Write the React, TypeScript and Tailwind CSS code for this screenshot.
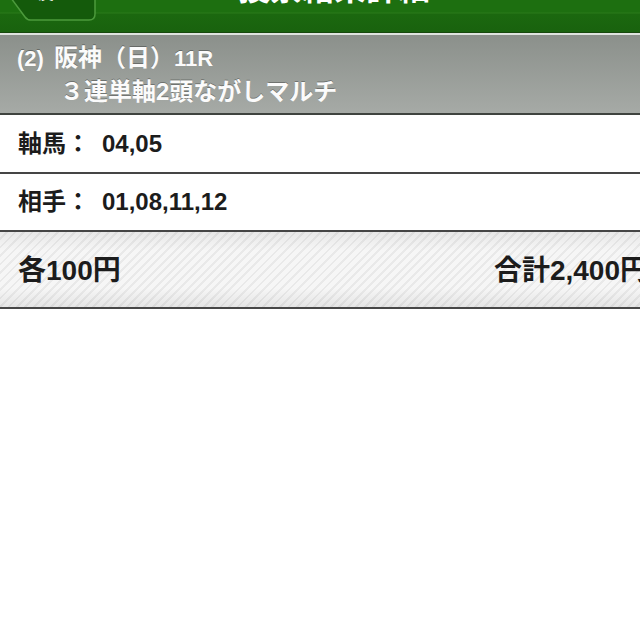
import React from "react";

const BackButton = () => (
  <svg
    className="absolute left-0 top-0"
    width="100"
    height="24"
    viewBox="0 0 100 24"
  >
    <path
      d="M11 -2 L25 17 Q27 20 31 20 L89 20 Q95 20 95 14 L95 -2 Z"
      fill="#145a0b"
      stroke="#4c9a3c"
      strokeWidth="1.5"
    />
  </svg>
);

const InfoRow = ({ label, value }: { label: string; value: string }) => (
  <div className="flex h-[58px] items-center border-b-2 border-[#454545] px-[18px] text-[24px] font-bold text-[#1c1c1c]">
    <span>{label}</span>
    <span className="ml-[12px]">{value}</span>
  </div>
);

export default function App() {
  return (
    <div className="h-[640px] w-[640px] overflow-hidden bg-white font-['Liberation_Sans','Noto_Sans_CJK_JP',sans-serif]">
      {/* title bar */}
      <div className="relative h-[33px] overflow-hidden border-b border-[#17480d] bg-[linear-gradient(#1d6f10_0px,#1d6f10_12px,#2a7a1a_13px,#1b680f_14px,#19620e_32px)]">
        <BackButton />
        <div className="absolute left-[38px] top-[-14px] text-[16px] font-bold leading-none text-white">
          戻る
        </div>
        <div className="mt-[-27px] flex justify-center pl-[28px] text-[32px] font-bold leading-[32px] text-white">
          投票結果詳細
        </div>
      </div>
      <div className="h-[2px] bg-[#dfe3df]" />

      {/* race heading */}
      <div className="h-[80px] border-b-2 border-[#3f433f] bg-[linear-gradient(#8b908b,#a6aaa6)] px-[17px] pt-[6px] text-[24px] font-bold leading-[33px] text-[#fbfbfb] [text-shadow:0_-1px_0_rgba(0,0,0,0.3)]">
        <div>
          <span className="mr-[10px] text-[22px]">(2)</span>阪神（日）<span className="text-[22px]">11R</span>
        </div>
        <div className="pl-[43px]">３連単軸2頭ながしマルチ</div>
      </div>

      <div className="h-[1px]" />
      <InfoRow label="軸馬：" value="04,05" />
      <InfoRow label="相手：" value="01,08,11,12" />

      {/* total bar */}
      <div className="flex h-[77px] items-center justify-between border-b-2 border-[#474747] bg-[linear-gradient(rgba(0,0,0,0.06),rgba(255,255,255,0)_25%,rgba(255,255,255,0)_75%,rgba(0,0,0,0.07)),repeating-linear-gradient(135deg,#f6f6f6_0px,#f6f6f6_4px,#e9e9e9_4px,#e9e9e9_6px)] pl-[18px] pr-0 pt-[2px] text-[28px] font-bold text-[#1c1c1c]">
        <span>各100円</span>
        <span className="mr-[-8px]">合計2,400円</span>
      </div>
    </div>
  );
}
